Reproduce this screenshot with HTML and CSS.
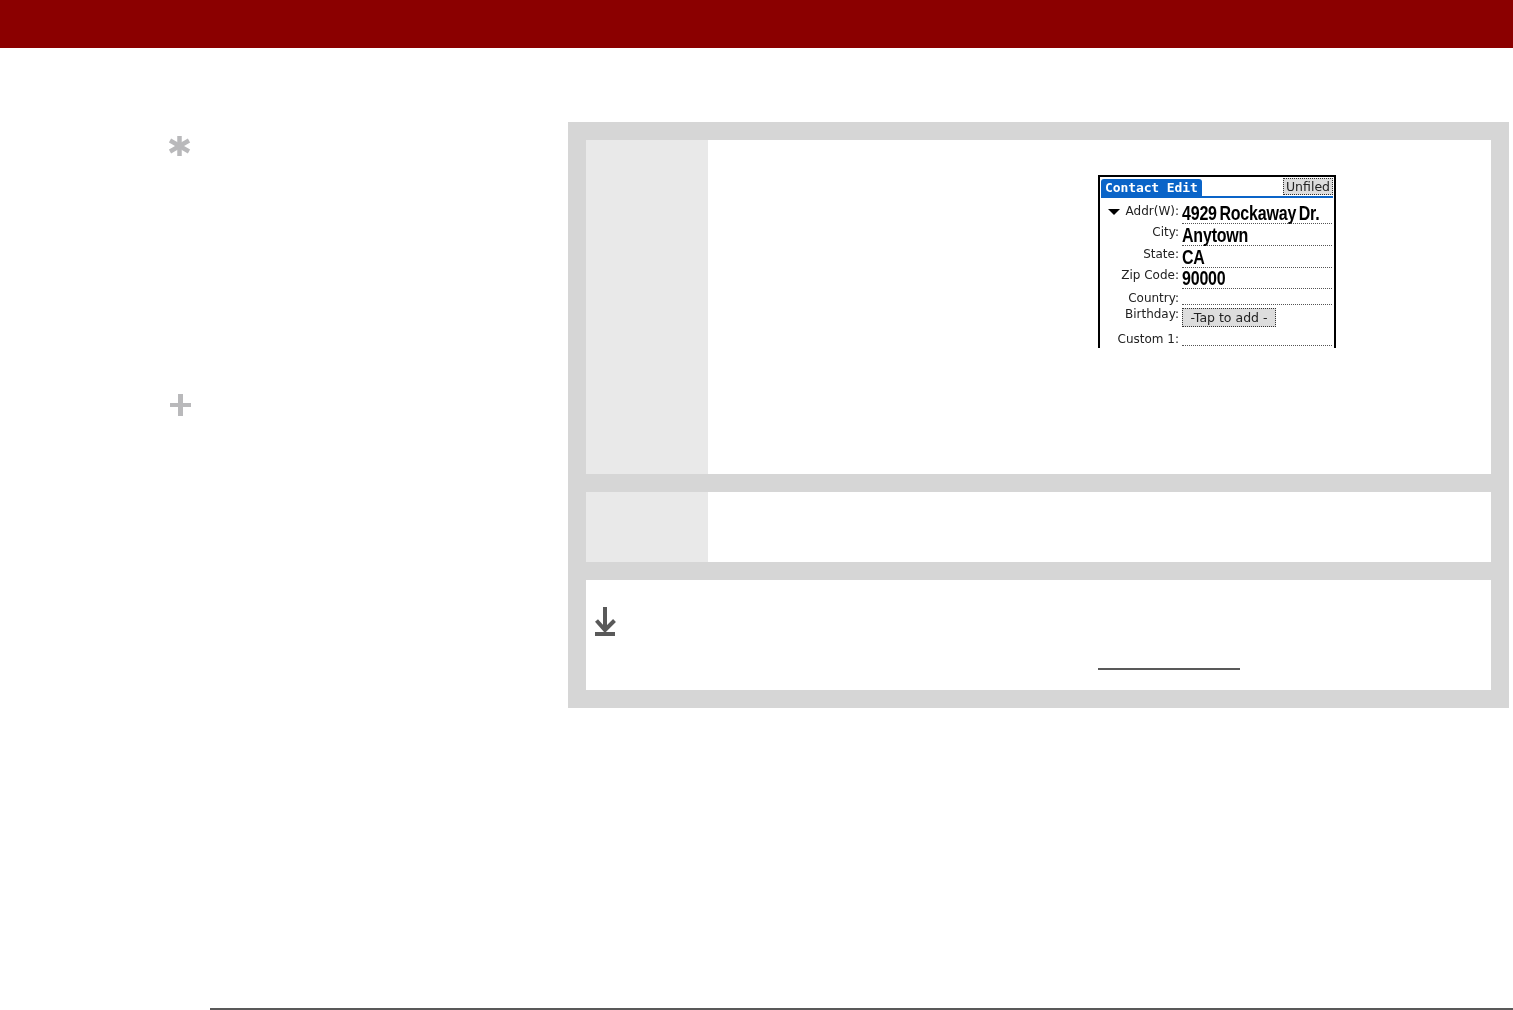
FILE: index.html
```html
<!DOCTYPE html>
<html lang="en">
<head>
<meta charset="utf-8">
<title>Contact Edit</title>
<link rel="stylesheet" href="styles.css">
</head>
<body>
<header class="topbar"></header>
<main class="content">
  <aside class="sidebar">
    <svg class="side-icon" width="22" height="22" viewBox="0 0 22 22" aria-hidden="true">
      <g stroke="#b9b9bb" stroke-width="4.5" fill="none">
        <path d="M10.5 1V21"/>
        <path d="M1 5.5L20 16.5"/>
        <path d="M20 5.5L1 16.5"/>
      </g>
    </svg>
    <svg class="side-icon side-icon-plus" width="21" height="22" viewBox="0 0 21 22" aria-hidden="true">
      <path d="M8 0h5v9h8v4h-8v9H8v-9H0V9h8z" fill="#b9b9bb"/>
    </svg>
  </aside>
  <section class="panel">
    <div class="step step-large">
      <div class="step-num"></div>
      <div class="step-body">
        <div class="device">
          <div class="device-title">
            <span class="tab">Contact Edit</span>
            <span class="category">Unfiled</span>
          </div>
          <div class="form">
            <div class="row row-a"><span class="label"><i class="caret"></i>Addr(W):</span><span class="value"><b class="squeeze">4929 Rockaway Dr.</b></span></div>
            <div class="row row-b"><span class="label">City:</span><span class="value"><b class="squeeze">Anytown</b></span></div>
            <div class="row row-b"><span class="label">State:</span><span class="value"><b class="squeeze">CA</b></span></div>
            <div class="row row-c"><span class="label">Zip Code:</span><span class="value"><b class="squeeze">90000</b></span></div>
            <div class="row row-d"><span class="label">Country:</span><span class="value"></span></div>
            <div class="row row-e"><span class="label">Birthday:</span><span class="tap">-Tap to add -</span></div>
            <div class="row row-f"><span class="label">Custom 1:</span><span class="value"></span></div>
          </div>
        </div>
      </div>
    </div>
    <div class="step step-small">
      <div class="step-num"></div>
      <div class="step-body"></div>
    </div>
    <div class="note">
      <svg class="note-icon" width="22" height="30" viewBox="0 0 22 30" aria-hidden="true">
        <g stroke="#595959" fill="none">
          <path d="M10 0V24" stroke-width="4"/>
          <path d="M1.5 13.5L10 23L19.5 13.5" stroke-width="4"/>
          <path d="M0 27H20" stroke-width="4"/>
        </g>
      </svg>
      <span class="note-rule"></span>
    </div>
  </section>
</main>
<footer class="footer-rule"></footer>
</body>
</html>
```
FILE: styles.css
```css
* { box-sizing: border-box; }
html, body { margin: 0; padding: 0; height: 100%; }
body {
  display: flex;
  flex-direction: column;
  height: 1010px;
  overflow: hidden;
  background: #fff;
  font-family: "DejaVu Sans", sans-serif;
}
.topbar { height: 48px; background: #8b0000; flex: none; }
.content { flex: 1; display: flex; padding-top: 74px; }
.sidebar {
  width: 568px;
  flex: none;
  padding: 13px 0 0 169px;
  display: flex;
  flex-direction: column;
  align-items: flex-start;
}
.side-icon { display: block; }
.side-icon-plus { margin-top: 237px; margin-left: 1px; }
.panel {
  width: 941px;
  height: 586px;
  flex: none;
  background: #d6d6d6;
  padding: 18px;
  display: flex;
  flex-direction: column;
  gap: 18px;
}
.step { display: flex; background: #fff; }
.step-large { height: 334px; }
.step-small { height: 70px; }
.step-num { width: 122px; flex: none; background: #e9e9e9; }
.step-body { flex: 1; padding: 35px 0 0 390px; }
.note { height: 110px; background: #fff; position: relative; padding: 27px 0 0 9px; }
.note-icon { display: block; }
.note-rule {
  position: absolute;
  left: 512px;
  top: 88px;
  width: 142px;
  height: 2px;
  background: #595959;
}
.footer-rule { height: 2px; margin-left: 210px; background: #595959; flex: none; }

.device {
  width: 238px;
  height: 173px;
  border-top: 2px solid #000;
  border-left: 2px solid #000;
  border-right: 2px solid #000;
  padding: 1px 1px 0;
  overflow: hidden;
  filter: blur(0.35px);
  color: #111;
}
.device-title {
  height: 20px;
  display: flex;
  justify-content: space-between;
  align-items: flex-start;
  border-bottom: 2px solid #0a64c8;
}
.tab {
  width: 101px;
  height: 18px;
  margin-top: 1px;
  background: #0a64c8;
  color: #fff;
  border-radius: 3px 3px 0 0;
  font: bold 13px/18px "DejaVu Sans Mono", monospace;
  padding-left: 4px;
  letter-spacing: -0.1px;
  white-space: nowrap;
}
.category {
  width: 50px;
  height: 17px;
  background: #ddd;
  border: 1px dotted #333;
  font-size: 12.5px;
  line-height: 15px;
  text-align: center;
  color: #222;
}
.row {
  display: grid;
  grid-template-columns: 78px 150px;
  column-gap: 3px;
  align-items: end;
}
.row-a { height: 26px; --gap: 6px; }
.row-b { height: 22px; --gap: 7px; }
.row-c { height: 21px; --gap: 7px; }
.row-d { height: 16px; --gap: 0px; }
.row-e { height: 23px; --gap: 7px; }
.row-f { height: 18px; --gap: 0px; }
.label {
  font-size: 12px;
  line-height: 14px;
  margin-bottom: var(--gap);
  text-align: right;
  white-space: nowrap;
  color: #222;
  position: relative;
}
.caret {
  position: absolute;
  left: 7px;
  top: 5px;
  width: 0;
  height: 0;
  border-left: 6px solid transparent;
  border-right: 6px solid transparent;
  border-top: 6px solid #000;
}
.value {
  display: block;
  height: 100%;
  border-bottom: 1px dotted #555;
  font-family: "Liberation Sans", sans-serif;
  font-size: 20px;
  line-height: 20px;
  color: #000;
}
.squeeze {
  display: inline-block;
  font-weight: bold;
  white-space: nowrap;
  word-spacing: -2px;
  letter-spacing: -0.25px;
  transform: scaleX(0.8);
  transform-origin: left center;
}
.row-a .value { padding-top: 5px; }
.row-b .value { padding-top: 1px; }
.row-c .value { padding-top: 0; }
.tap {
  width: 94px;
  height: 19px;
  margin-bottom: 1px;
  background: #ddd;
  border: 1px dotted #333;
  font-size: 12.5px;
  line-height: 18px;
  text-align: center;
  white-space: nowrap;
  color: #222;
}
```
